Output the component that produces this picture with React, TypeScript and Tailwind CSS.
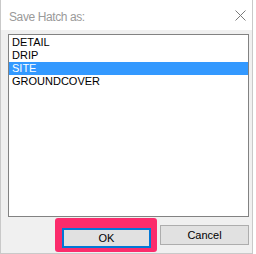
const items = ['DETAIL', 'DRIP', 'SITE', 'GROUNDCOVER']

export default function App() {
  const selected = 'SITE'

  return (
    <div className="w-[256px] h-[254px] bg-white flex font-['Liberation_Sans',Arial,sans-serif]">
      <div className="w-[253px] h-[254px] flex flex-col border-l border-r border-b border-[#c9c9c9]">
        {/* Title bar */}
        <div className="h-[30px] bg-white flex items-start">
          <span className="ml-[8px] pt-[10px] leading-[14px] text-[12px] tracking-[-0.4px] text-[#9a9a9a]">
            Save Hatch as:
          </span>
          <svg className="ml-auto mr-[6px] mt-[10px]" width="11" height="11" viewBox="0 0 11 11">
            <path d="M0.5 0.5 L10.5 10.5 M10.5 0.5 L0.5 10.5" stroke="#7a7a7a" strokeWidth="1" />
          </svg>
        </div>

        {/* Body */}
        <div className="flex-1 bg-[#f0f0f0] flex flex-col pt-[4px]">
          <div className="ml-[7px] w-[241px] h-[183px] bg-white border border-[#828282] pt-px">
            {items.map((item) => (
              <div
                key={item}
                className={
                  item === selected
                    ? 'h-[13px] leading-[13px] pl-[3px] text-[11px] bg-[#3399ff] text-white'
                    : 'h-[13px] leading-[13px] pl-[3px] text-[11px] text-black'
                }
              >
                {item}
              </div>
            ))}
          </div>

          {/* Buttons */}
          <div className="flex items-start mt-[1px]">
            <div className="ml-[54px] w-[102px] h-[34px] rounded-[3px] bg-[#fb2c6c] pt-[7px] pl-[7px]">
              <button className="w-[89px] h-[20px] bg-[#e1e1e1] border-2 border-[#0078d7] text-[11px] leading-[16px] text-black">
                OK
              </button>
            </div>
            <button className="ml-[3px] mt-[7px] w-[89px] h-[20px] bg-[#e1e1e1] border border-[#adadad] text-[11px] leading-[18px] text-black">
              Cancel
            </button>
          </div>
        </div>
      </div>
    </div>
  )
}
